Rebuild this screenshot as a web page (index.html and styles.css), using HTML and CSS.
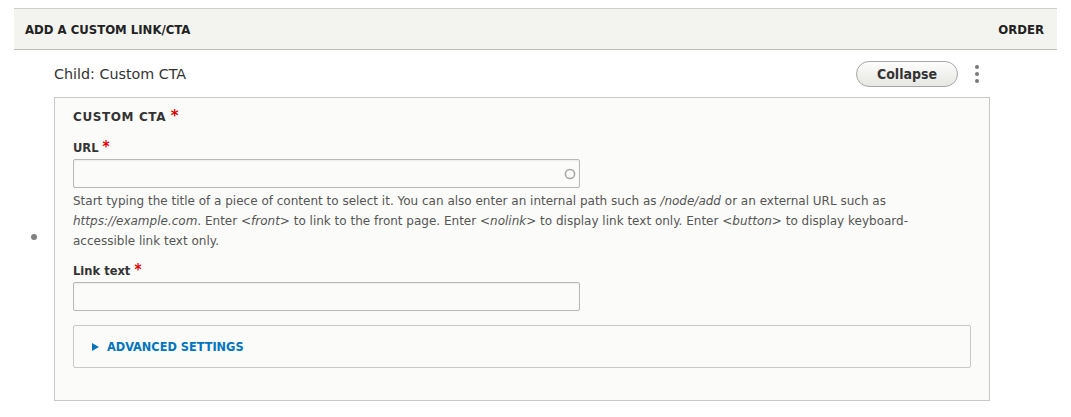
FILE: index.html
```html
<!DOCTYPE html>
<html lang="en">
<head>
<meta charset="utf-8">
<title>Custom CTA</title>
<link rel="stylesheet" href="styles.css">
</head>
<body>
<div class="field-table">
  <div class="thead">
    <span class="th-title">ADD A CUSTOM LINK/CTA</span>
    <span class="th-order">ORDER</span>
  </div>
  <div class="row">
    <div class="handle"><span class="dot"></span></div>
    <div class="content">
      <div class="top-bar">
        <span class="child-label">Child: Custom CTA</span>
        <div class="actions">
          <button class="btn-collapse" type="button">Collapse</button>
          <span class="kebab"><i></i><i></i><i></i></span>
        </div>
      </div>
      <div class="fieldset">
        <div class="legend">CUSTOM CTA <span class="req">*</span></div>
        <label class="label">URL <span class="req">*</span></label>
        <div class="input autocomplete">
          <svg class="throbber" width="12" height="12" viewBox="0 0 12 12"><circle cx="6" cy="6" r="4.6" fill="none" stroke="#a3a3a3" stroke-width="1.5"/></svg>
        </div>
        <div class="description">Start typing the title of a piece of content to select it. You can also enter an internal path such as <em>/node/add</em> or an external URL such as <em>https://example.com</em>. Enter <em>&lt;front&gt;</em> to link to the front page. Enter <em>&lt;nolink&gt;</em> to display link text only. Enter <em>&lt;button&gt;</em> to display keyboard-accessible link text only.</div>
        <label class="label label-link">Link text <span class="req">*</span></label>
        <div class="input"></div>
        <div class="details">
          <span class="tri"></span><span class="summary">ADVANCED SETTINGS</span>
        </div>
      </div>
    </div>
  </div>
</div>
</body>
</html>
```

FILE: styles.css
```css
html, body {
  margin: 0;
  padding: 0;
  background: #ffffff;
  font-family: "DejaVu Sans", Verdana, sans-serif;
  color: #333333;
}

.field-table {
  margin: 8px 0 0 14px;
  width: 1043px;
}

.thead {
  display: flex;
  justify-content: space-between;
  align-items: center;
  height: 40px;
  padding: 0 13px 0 11px;
  background: #f3f3f0;
  border-top: 1px solid #cfcfcb;
  border-bottom: 1px solid #bfbfba;
  font-family: "DejaVu Sans Condensed", "DejaVu Sans", sans-serif;
  font-stretch: condensed;
  font-size: 13px;
  font-weight: bold;
  color: #222;
}

.row {
  display: flex;
  align-items: stretch;
  padding: 11px 0 23px;
}

.handle {
  width: 40px;
  display: flex;
  align-items: center;
  justify-content: center;
  padding-top: 12px;
}

.dot {
  width: 6px;
  height: 6px;
  border-radius: 50%;
  background: #808080;
  margin-left: -1px;
}

.content {
  width: 936px;
}

.top-bar {
  display: flex;
  justify-content: space-between;
  align-items: center;
  height: 25px;
}

.child-label {
  font-size: 14.3px;
  color: #333;
}

.actions {
  display: flex;
  align-items: center;
}

.btn-collapse {
  width: 102px;
  height: 26px;
  border: 1px solid #a6a6a6;
  border-radius: 14px;
  background: linear-gradient(#fdfdfc, #e6e6e2);
  font-family: "DejaVu Sans Condensed", "DejaVu Sans", sans-serif;
  font-stretch: condensed;
  font-size: 14px;
  font-weight: bold;
  color: #333;
  padding: 0;
}

.kebab {
  display: flex;
  flex-direction: column;
  align-items: center;
  justify-content: center;
  gap: 3px;
  width: 12px;
  margin: 0 7px 0 13px;
}

.kebab i {
  display: block;
  width: 4px;
  height: 4px;
  border-radius: 50%;
  background: #7a7a7a;
}

.fieldset {
  margin-top: 11px;
  border: 1px solid #c8c8c4;
  background: #fbfbf9;
  padding: 8px 18px 32px 18px;
}

.legend {
  height: 20px;
  line-height: 20px;
  font-size: 12px;
  font-weight: bold;
  letter-spacing: 0.6px;
  color: #333;
}

.req {
  color: #e00000;
  font-size: 15px;
  letter-spacing: 0;
}

.label {
  display: block;
  margin-top: 11px;
  height: 20px;
  line-height: 20px;
  font-family: "DejaVu Sans Condensed", "DejaVu Sans", sans-serif;
  font-stretch: condensed;
  font-size: 12.8px;
  font-weight: bold;
  color: #333;
}

.label-link {
  margin-top: 9px;
}

.input {
  box-sizing: border-box;
  width: 507px;
  height: 29px;
  margin-top: 2px;
  border: 1px solid #b8b8b4;
  border-radius: 2px;
  background: #fbfbf9;
  box-shadow: inset 0 1px 2px rgba(0,0,0,0.06);
  display: flex;
  align-items: center;
  justify-content: flex-end;
  padding-right: 3px;
}

.description {
  margin-top: 3px;
  max-width: 880px;
  font-size: 12px;
  line-height: 20px;
  color: #555;
}

.description em {
  font-style: italic;
}

.details {
  box-sizing: border-box;
  margin-top: 14px;
  height: 43px;
  border: 1px solid #c8c8c4;
  border-radius: 2px;
  display: flex;
  align-items: center;
  padding-left: 18px;
}

.tri {
  width: 0;
  height: 0;
  border-top: 4px solid transparent;
  border-bottom: 4px solid transparent;
  border-left: 7px solid #0074bd;
  margin-right: 8px;
}

.summary {
  font-family: "DejaVu Sans Condensed", "DejaVu Sans", sans-serif;
  font-stretch: condensed;
  font-size: 12.6px;
  font-weight: bold;
  color: #0074bd;
}
```
